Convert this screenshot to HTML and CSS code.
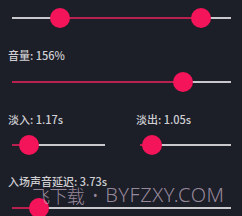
FILE: index.html
```html
<!DOCTYPE html>
<html lang="zh">
<head>
<meta charset="utf-8">
<link rel="stylesheet" href="styles.css">
</head>
<body>
<div class="panel">
  <div class="slider first">
    <div class="track">
      <div class="fill" style="left:21.9%;width:64.4%"></div>
      <div class="thumb" style="left:21.9%"></div>
      <div class="thumb" style="left:86.3%"></div>
    </div>
  </div>

  <div class="label">音量: 156%</div>
  <div class="slider">
    <div class="track">
      <div class="fill" style="left:0;width:78.1%"></div>
      <div class="thumb" style="left:78.1%"></div>
    </div>
  </div>

  <div class="pair">
    <div class="col">
      <div class="label">淡入: 1.17s</div>
      <div class="slider">
        <div class="track">
          <div class="fill" style="left:0;width:18.3%"></div>
          <div class="thumb" style="left:18.3%"></div>
        </div>
      </div>
    </div>
    <div class="col">
      <div class="label">淡出: 1.05s</div>
      <div class="slider">
        <div class="track">
          <div class="fill" style="left:0;width:13.2%"></div>
          <div class="thumb" style="left:13.2%"></div>
        </div>
      </div>
    </div>
  </div>

  <div class="label last">入场声音延迟: 3.73s</div>
  <div class="slider">
    <div class="track">
      <div class="fill" style="left:0;width:12.3%"></div>
      <div class="thumb" style="left:12.3%"></div>
    </div>
  </div>
</div>
<div class="watermark"><span class="cn">飞下载</span><span class="dot">•</span><span class="en">BYFZXY.COM</span></div>
</body>
</html>
```
FILE: styles.css
```css
html, body {
  margin: 0;
  padding: 0;
  background: #1c1e28;
  width: 242px;
  height: 216px;
  overflow: hidden;
}
body {
  position: relative;
  font-family: "Noto Sans CJK SC", "Noto Sans", sans-serif;
}
.panel {
  padding: 8px 11px 0 12px;
  display: flex;
  flex-direction: column;
}
.label {
  margin-top: 20px;
  margin-left: -4px;
  height: 14px;
  line-height: 14px;
  font-size: 11px;
  font-weight: 500;
  color: #cfcfd2;
  white-space: nowrap;
}
.label.last {
  margin-top: 19px;
}
.slider {
  margin-top: 10px;
  height: 20px;
  display: flex;
  align-items: center;
}
.slider.first {
  margin-top: 0;
}
.track {
  position: relative;
  flex: 1;
  height: 2px;
  background: #c9c9cd;
}
.fill {
  position: absolute;
  top: 0;
  height: 2px;
  background: #b8204f;
}
.thumb {
  position: absolute;
  top: 1px;
  width: 20px;
  height: 20px;
  margin: -10px 0 0 -10px;
  border-radius: 50%;
  background: #f3145a;
}
.pair {
  display: grid;
  grid-template-columns: 93px 91px;
  column-gap: 35px;
}
.pair .slider {
  margin-top: 9px;
}
.watermark {
  position: absolute;
  left: 32px;
  top: 182px;
  display: flex;
  align-items: center;
  font-family: "Noto Sans CJK SC", "Noto Sans", sans-serif;
  font-weight: 300;
  line-height: 26px;
  color: rgba(200, 180, 200, 0.72);
  white-space: nowrap;
}
.cn {
  font-size: 18px;
  letter-spacing: -0.6px;
}
.dot {
  font-family: "Noto Sans", sans-serif;
  font-size: 16px;
  margin: 0 7px 0 8px;
}
.en {
  font-family: "Noto Sans", sans-serif;
  font-size: 20px;
  letter-spacing: 0.5px;
}
```
